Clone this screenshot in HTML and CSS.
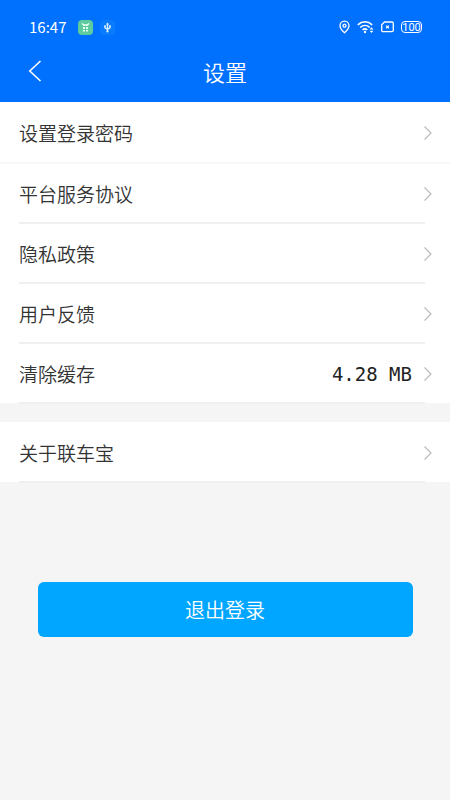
FILE: index.html
```html
<!DOCTYPE html>
<html lang="zh-CN">
<head>
<meta charset="utf-8">
<meta name="viewport" content="width=device-width, initial-scale=1">
<title>设置</title>
<link rel="stylesheet" href="styles.css">
</head>
<body>
<header class="header">
  <div class="status">
    <time class="clock">16:47</time>
    <svg class="app-icon" width="15" height="15" viewBox="0 0 15 15" aria-hidden="true">
      <rect width="15" height="15" rx="4" fill="#5dcb9d"/>
      <path d="M4 3.4 5.6 5h3.8L11 3.4" fill="none" stroke="#fff" stroke-width="1.3"/>
      <path d="M5 7h2v2H5zM8 7h2v2H8zM5 10h2v1.6H5zM8 10h2v1.6H8z" fill="#e4fff3"/>
    </svg>
    <svg class="usb-icon" width="15" height="15" viewBox="0 0 15 15" aria-hidden="true">
      <rect width="15" height="15" rx="4" fill="#0a7aff"/>
      <path d="M7.5 3.5v8M5 6v1.8l2.5 1.7L10 7.8V6" fill="none" stroke="#d9f1ff" stroke-width="1.4"/>
      <path d="M7.5 2.5 9 4.6H6zM4.2 5.2h1.7v1.6H4.2zM9.1 5.2h1.7v1.6H9.1z" fill="#d9f1ff"/>
      <circle cx="7.5" cy="11.4" r="1.1" fill="#d9f1ff"/>
    </svg>
    <div class="system">
      <svg width="11" height="14" viewBox="0 0 11 14" fill="none" stroke="#fff" stroke-width="1.3" aria-hidden="true">
        <path d="M5.5 12.7C3 10.4 1 8 1 5.7a4.5 4.5 0 0 1 9 0c0 2.3-2 4.7-4.5 7z"/>
        <circle cx="5.5" cy="5.7" r="1.5"/>
      </svg>
      <svg width="17" height="14" viewBox="0 0 17 14" fill="none" stroke="#fff" stroke-width="1.6" aria-hidden="true">
        <path d="M.8 4.8c4.2-4 10.2-4 14.4 0M3.2 7.5c2.8-2.7 6.8-2.7 9.6 0M5.6 10c1.4-1.3 3.2-1.3 4.7 0"/>
        <circle cx="8" cy="12" r="1.2" fill="#fff" stroke="none"/>
        <path d="m12.6 9.4 1.9-2.2 1.9 2.2zM12.6 10.8l1.9 2.2 1.9-2.2z" fill="#fff" stroke="none"/>
      </svg>
      <svg width="13" height="12" viewBox="0 0 13 12" fill="none" stroke="#fff" stroke-width="1.3" aria-hidden="true">
        <path d="M3.5 1H11a1.3 1.3 0 0 1 1.3 1.3v7A1.3 1.3 0 0 1 11 10.600H2A1.3 1.3 0 0 1 .7 9.3V3.7z"/>
        <path d="m5.2 4.6 2.600 2.600M7.8 4.600 5.200 7.200"/>
      </svg>
      <span class="battery">100</span>
    </div>
  </div>
  <div class="titlebar">
    <button class="back" type="button" aria-label="返回">
      <svg width="14" height="22" viewBox="0 0 14 22" fill="none" stroke="#fff" stroke-width="1.6" aria-hidden="true"><path d="M12.500 1 1.800 11l10.700 10"/></svg>
    </button>
    <h1 class="title">设置</h1>
  </div>
</header>
<main>
  <nav class="group">
    <a class="row row-first" href="#password"><span class="label">设置登录密码</span><svg class="chevron" viewBox="0 0 8 14" aria-hidden="true"><path d="m.5.5 6.500 6.500-6.500 6.500"/></svg></a>
    <a class="row" href="#terms"><span class="label">平台服务协议</span><svg class="chevron" viewBox="0 0 8 14" aria-hidden="true"><path d="m.5.5 6.500 6.500-6.500 6.500"/></svg></a>
    <a class="row" href="#privacy"><span class="label">隐私政策</span><svg class="chevron" viewBox="0 0 8 14" aria-hidden="true"><path d="m.5.5 6.500 6.500-6.500 6.500"/></svg></a>
    <a class="row" href="#feedback"><span class="label">用户反馈</span><svg class="chevron" viewBox="0 0 8 14" aria-hidden="true"><path d="m.5.5 6.500 6.500-6.500 6.500"/></svg></a>
    <a class="row" href="#cache"><span class="label">清除缓存</span><span class="value">4.28 MB</span><svg class="chevron" viewBox="0 0 8 14" aria-hidden="true"><path d="m.5.5 6.500 6.500-6.500 6.500"/></svg></a>
  </nav>
  <nav class="group">
    <a class="row" href="#about"><span class="label">关于联车宝</span><svg class="chevron" viewBox="0 0 8 14" aria-hidden="true"><path d="m.5.5 6.500 6.500-6.500 6.500"/></svg></a>
  </nav>
  <button class="logout" type="button">退出登录</button>
</main>
</body>
</html>
```
FILE: styles.css
```css
* {
  box-sizing: border-box;
}

body {
  margin: 0;
  min-height: 100vh;
  background: #f5f5f5;
  color: #333;
  font-family: "Noto Sans CJK SC", sans-serif;
  font-weight: 350;
}

.header {
  background: #0070ff;
  color: #fff;
}

.status {
  display: flex;
  align-items: center;
  height: 42px;
  padding: 12px 28px 0 29px;
}

.clock {
  margin-right: 12px;
  font-size: 15px;
  font-weight: 400;
  line-height: 20px;
}

.usb-icon {
  margin-left: 7px;
}

.system {
  display: flex;
  align-items: center;
  gap: 7px;
  margin-left: auto;
}

.battery {
  width: 21px;
  height: 12px;
  border: 1px solid #fff;
  border-radius: 4px;
  font-family: Roboto, sans-serif;
  font-size: 11px;
  font-weight: 400;
  line-height: 11px;
  text-align: center;
}

.titlebar {
  display: grid;
  grid-template-columns: 44px 1fr 44px;
  align-items: center;
  height: 60px;
  padding-bottom: 2px;
}

.back {
  display: flex;
  justify-content: flex-end;
  padding: 0 2px 0 0;
  border: 0;
  background: none;
}

.title {
  margin: 0;
  font-size: 22px;
  font-weight: inherit;
  line-height: 32px;
  text-align: center;
}

.group {
  margin-bottom: 19px;
  background: #fff;
}

.row {
  position: relative;
  display: flex;
  align-items: center;
  height: 60px;
  padding: 1px 18px 0 19px;
  color: inherit;
  font-size: 19px;
  line-height: 28px;
  text-decoration: none;
}

.row::after {
  content: "";
  position: absolute;
  z-index: 1;
  right: 25px;
  bottom: -1px;
  left: 19px;
  height: 2px;
  background: #f0f0f0;
}

.row-first {
  height: 61px;
}

.row-first::after {
  right: 0;
  left: 0;
  background: #f8f8f8;
}

.label {
  flex: 1;
}

.value {
  margin-right: 12px;
  color: #222;
  font-family: "DejaVu Sans Mono", monospace;
}

.chevron {
  width: 8px;
  height: 14px;
  fill: none;
  stroke: #bbb;
  stroke-width: 1.2;
}

.logout {
  display: block;
  width: calc(100% - 75px);
  height: 55px;
  margin: 100px auto 0;
  border: 0;
  border-radius: 6px;
  background: #00a6ff;
  color: #fff;
  font-family: inherit;
  font-size: 20px;
  font-weight: inherit;
}
```
